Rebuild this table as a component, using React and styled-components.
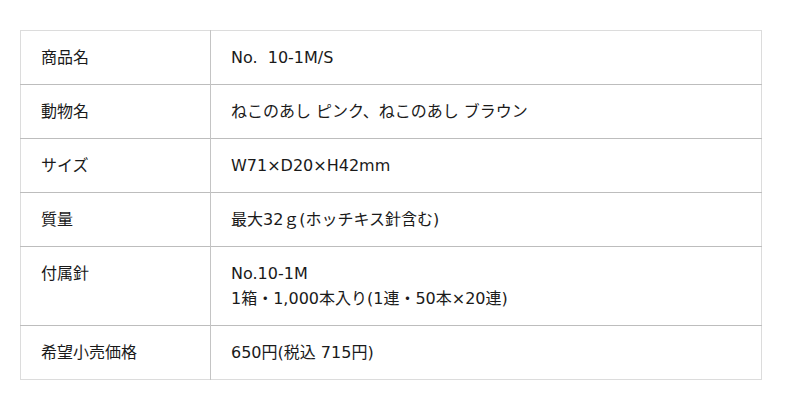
import React from 'react';
import styled, { createGlobalStyle } from 'styled-components';

const GlobalStyle = createGlobalStyle`
  body {
    margin: 0;
    background: #fff;
    font-family: 'DejaVu Sans', 'Noto Sans CJK JP', sans-serif;
    color: #1a1a1a;
  }
`;

const Page = styled.div`
  padding: 30px 38px 30px 20px;
`;

const SpecTable = styled.table`
  width: 742px;
  border-collapse: collapse;
  border: 1px solid #dcdcdc;
  font-family: 'DejaVu Sans', 'Noto Sans CJK JP', sans-serif;
  font-size: 16px;
  color: #1a1a1a;
`;

const Row = styled.tr`
  border-top: 1px solid #bdbdbd;
  &:first-child {
    border-top: 1px solid #dcdcdc;
  }
`;

const Label = styled.th`
  width: 149px;
  padding: 14px 20px;
  line-height: 25px;
  text-align: left;
  font-weight: normal;
  vertical-align: top;
  border-right: 1px solid #c4c4c4;
`;

const Value = styled.td`
  padding: 14px 20px;
  line-height: 25px;
  vertical-align: top;
`;

const Line = styled.div`
  white-space: pre;
`;

const specs = [
  { label: '商品名', value: ['No.  10-1M/S'] },
  { label: '動物名', value: ['ねこのあし ピンク、ねこのあし ブラウン'] },
  { label: 'サイズ', value: ['W71×D20×H42mm'] },
  { label: '質量', value: ['最大32ｇ(ホッチキス針含む)'] },
  { label: '付属針', value: ['No.10-1M', '1箱・1,000本入り(1連・50本×20連)'] },
  { label: '希望小売価格', value: ['650円(税込 715円)'] },
];

const App = () => (
  <>
    <GlobalStyle />
    <Page>
      <SpecTable>
        <tbody>
          {specs.map((s) => (
            <Row key={s.label}>
              <Label>{s.label}</Label>
              <Value>
                {s.value.map((line, i) => (
                  <Line key={i}>{line}</Line>
                ))}
              </Value>
            </Row>
          ))}
        </tbody>
      </SpecTable>
    </Page>
  </>
);

export default App;
